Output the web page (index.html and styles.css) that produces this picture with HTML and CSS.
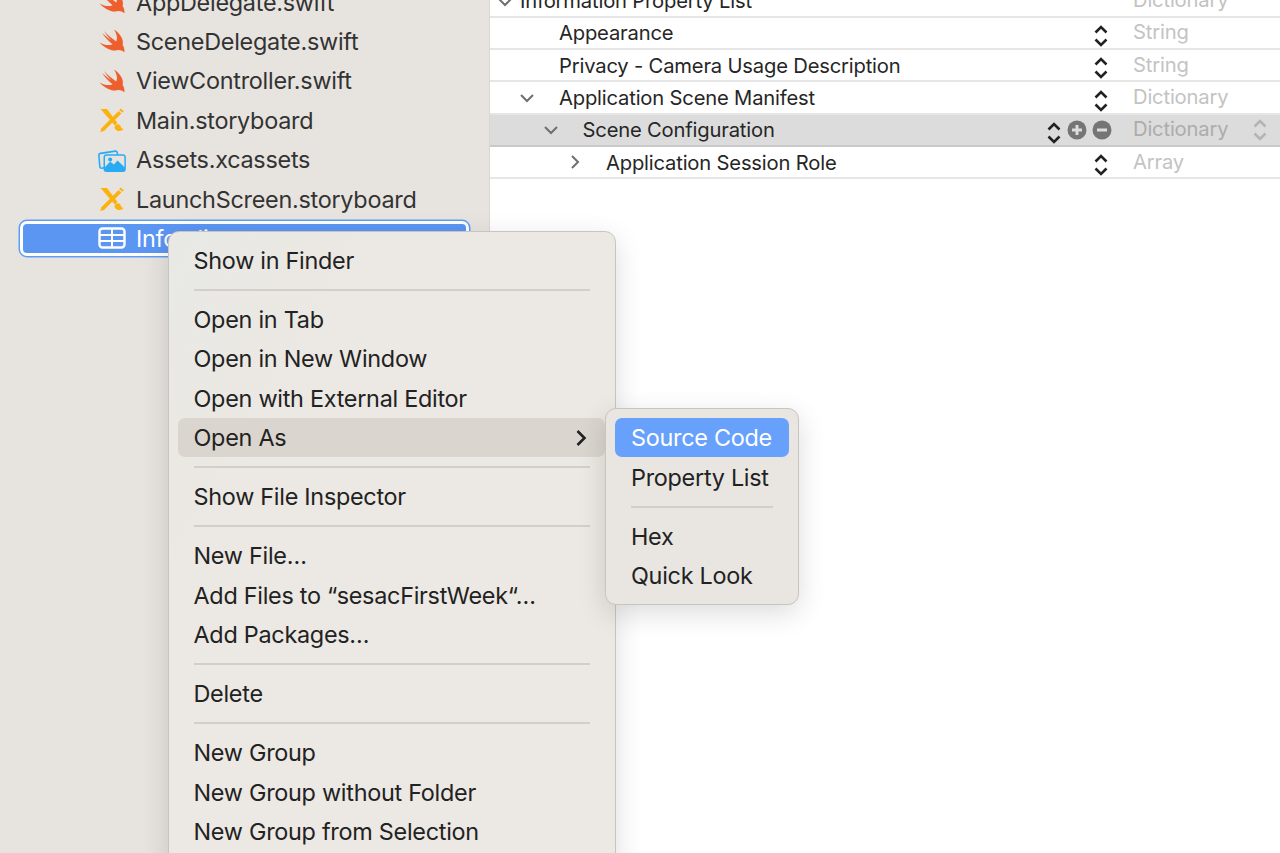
FILE: index.html
```html
<!DOCTYPE html>
<html lang="en">
<head>
<meta charset="utf-8">
<title>Xcode</title>
<link rel="stylesheet" href="styles.css">
</head>
<body>
<svg class="defs" width="0" height="0" aria-hidden="true">
  <defs>
    <symbol id="swift" viewBox="0 0 26 24">
      <path d="M0.5 13.5C5 18 12 23 18 21.2C20.2 20.6 22.5 21 25.5 23.2C25.6 20 24.8 17.6 23.6 16C25.2 10.5 21 4.5 15 0.5C17.5 4.5 19 9 17.2 12.4C13 9.5 8.2 5.4 5 2C7 5.2 10 9 12.2 11.2C9 9 5.6 6.2 3 4C6 8.2 10 12.6 13.6 15.2C10 17 5 16 0.5 13.5Z" fill="#ef5f2e"/>
    </symbol>
    <symbol id="board" viewBox="0 0 26 24">
      <path d="M1.5 1L8 1L18.5 15L15.8 17.5Z" fill="#fbb20f"/>
      <path d="M19.6 3L22.4 5.6L5 23L1.2 24L2.4 20.2Z" fill="#fbb20f"/>
      <path d="M21.6 0.4L24.8 3.2L23.4 4.8L20.2 2Z" fill="#fbb20f"/>
      <path d="M15.4 19.4C16.4 15.4 20.8 15.6 21.8 18.4C22.2 19.8 23 20.6 24.6 20.8C22.8 23.8 17.2 24.2 15.4 19.4Z" fill="#fbb20f"/>
    </symbol>
    <symbol id="assets" viewBox="0 0 30 26">
      <path d="M6.5 21.5L4 21.9C2.8 22 2 21.4 1.8 20.3L0.8 8C0.7 6.8 1.4 6 2.5 5.8L18.5 3.4C19.7 3.3 20.5 4 20.7 5L21 7.5" fill="none" stroke="#29abf4" stroke-width="1.7"/>
      <rect x="6.6" y="7.6" width="22.6" height="17.6" rx="2.4" fill="none" stroke="#29abf4" stroke-width="1.6"/>
      <path d="M7 21L13 14.5L17 18L21 13.5L29 21V23C29 24.2 28 25 27 25H9C7.8 25 7 24.2 7 23Z" fill="#29abf4"/>
      <circle cx="13" cy="12.5" r="2.2" fill="#29abf4"/>
    </symbol>
    <symbol id="updown" viewBox="0 0 16 24">
      <path d="M2.5 8.5L8 3L13.5 8.5M2.5 15.5L8 21L13.5 15.5" fill="none" stroke="currentColor" stroke-width="2.6"/>
    </symbol>
  </defs>
</svg>

<div class="window">
  <aside class="navigator">
    <div class="file-list">
      <div class="file"><svg class="file-icon"><use href="#swift"/></svg><span>AppDelegate.swift</span></div>
      <div class="file"><svg class="file-icon"><use href="#swift"/></svg><span>SceneDelegate.swift</span></div>
      <div class="file"><svg class="file-icon"><use href="#swift"/></svg><span>ViewController.swift</span></div>
      <div class="file"><svg class="file-icon"><use href="#board"/></svg><span>Main.storyboard</span></div>
      <div class="file"><svg class="file-icon"><use href="#assets"/></svg><span>Assets.xcassets</span></div>
      <div class="file"><svg class="file-icon"><use href="#board"/></svg><span>LaunchScreen.storyboard</span></div>
      <div class="file selected">
        <svg class="file-icon" viewBox="0 0 28 22"><rect x="1.5" y="1.5" width="25" height="19" rx="3" fill="none" stroke="#fff" stroke-width="2.4"/><path d="M2 8H26M2 14H26M14 2V20" stroke="#fff" stroke-width="2"/></svg>
        <span>Info.plist</span>
      </div>
    </div>
  </aside>

  <main class="plist">
    <div class="plist-rows">
      <div class="row top">
        <span class="twisty"><svg viewBox="0 0 16 10"><path d="M2 2L8 8L14 2"/></svg></span>
        <span class="key">Information Property List</span>
        <span class="type">Dictionary</span>
      </div>
      <div class="row lvl1">
        <span class="twisty"></span>
        <span class="key">Appearance</span>
        <span class="controls"><svg class="updown"><use href="#updown"/></svg></span>
        <span class="type">String</span>
      </div>
      <div class="row lvl1">
        <span class="twisty"></span>
        <span class="key">Privacy - Camera Usage Description</span>
        <span class="controls"><svg class="updown"><use href="#updown"/></svg></span>
        <span class="type">String</span>
      </div>
      <div class="row lvl1">
        <span class="twisty"><svg viewBox="0 0 16 10"><path d="M2 2L8 8L14 2"/></svg></span>
        <span class="key">Application Scene Manifest</span>
        <span class="controls"><svg class="updown"><use href="#updown"/></svg></span>
        <span class="type">Dictionary</span>
      </div>
      <div class="row lvl2 current">
        <span class="twisty"><svg viewBox="0 0 16 10"><path d="M2 2L8 8L14 2"/></svg></span>
        <span class="key">Scene Configuration</span>
        <span class="controls wide">
          <svg class="updown"><use href="#updown"/></svg>
          <svg class="round" viewBox="0 0 20 20"><circle cx="10" cy="10" r="9.5" fill="#757575"/><path d="M10 5V15M5 10H15" stroke="#dcdcdc" stroke-width="3"/></svg>
          <svg class="round" viewBox="0 0 20 20"><circle cx="10" cy="10" r="9.5" fill="#757575"/><path d="M5 10H15" stroke="#dcdcdc" stroke-width="3"/></svg>
        </span>
        <span class="type">Dictionary<svg class="updown muted"><use href="#updown"/></svg></span>
      </div>
      <div class="row lvl3">
        <span class="twisty"><svg class="closed" viewBox="0 0 10 16"><path d="M2 2L8 8L2 14"/></svg></span>
        <span class="key">Application Session Role</span>
        <span class="controls"><svg class="updown"><use href="#updown"/></svg></span>
        <span class="type">Array</span>
      </div>
    </div>
  </main>

  <nav class="menu context">
    <div class="item">Show in Finder</div>
    <div class="sep"></div>
    <div class="item">Open in Tab</div>
    <div class="item">Open in New Window</div>
    <div class="item">Open with External Editor</div>
    <div class="item open">Open As<svg class="arrow" viewBox="0 0 12 18"><path d="M2.5 2L9.5 9L2.5 16"/></svg></div>
    <div class="sep"></div>
    <div class="item">Show File Inspector</div>
    <div class="sep"></div>
    <div class="item">New File…</div>
    <div class="item">Add Files to “sesacFirstWeek“…</div>
    <div class="item">Add Packages…</div>
    <div class="sep"></div>
    <div class="item">Delete</div>
    <div class="sep"></div>
    <div class="item">New Group</div>
    <div class="item">New Group without Folder</div>
    <div class="item">New Group from Selection</div>
  </nav>

  <nav class="menu submenu">
    <div class="item active">Source Code</div>
    <div class="item">Property List</div>
    <div class="sep"></div>
    <div class="item">Hex</div>
    <div class="item">Quick Look</div>
  </nav>
</div>
</body>
</html>
```
FILE: styles.css
```css
* { box-sizing: border-box; }
html, body { margin: 0; padding: 0; height: 100%; overflow: hidden; background: #fff; }
body { font-family: Inter, "Liberation Sans", sans-serif; }
.defs { position: absolute; }

.window { position: relative; display: flex; width: 1280px; height: 853px; overflow: hidden; }

/* navigator */
.navigator { width: 490px; flex: none; background: #e7e4e0; border-right: 1px solid #dad7d3; }
.file-list { margin-top: -17.6px; display: flex; flex-direction: column; }
.file { display: flex; align-items: center; height: 39.4px; padding-left: 99px; gap: 9px; font-size: 23.4px; letter-spacing: -.26px; color: #333; white-space: nowrap; }
.file-icon { width: 28px; height: 24px; flex: none; margin-left: -1px; margin-right: 1px; }
.file.selected { width: 449px; height: 35px; margin: 2.2px 0 0 19.5px; padding-left: 76.5px; color: #fff; background: #5b96f3; border: 3px solid #fff; border-radius: 7px; box-shadow: 0 0 0 1.5px #5f9df5; }
.file.selected .file-icon { height: 22px; }

/* plist table */
.plist { flex: 1; min-width: 0; }
.plist-rows { margin-top: -14.5px; display: flex; flex-direction: column; }
.row { display: flex; align-items: center; height: 32.3px; border-bottom: 2px solid #e6e6e6; font-size: 20.2px; letter-spacing: -.18px; color: #262626; white-space: nowrap; }
.twisty { width: 64px; flex: none; display: flex; justify-content: center; align-items: center; }
.twisty svg { width: 16px; height: 10px; fill: none; stroke: #6f6f6f; stroke-width: 2; }
.twisty svg.closed { width: 10px; height: 16px; margin-left: 2px; }
.top .twisty { width: 30px; }
.top .twisty svg { margin-top: 3px; }
.lvl1 { padding-left: 5px; }
.lvl2 { padding-left: 28.5px; }
.lvl3 { padding-left: 52px; }
.key { flex: 1; min-width: 0; }
.controls { display: flex; align-items: center; color: #222; margin-right: 24px; gap: 5px; }
.controls.wide { margin-right: 21px; }
.controls .updown { margin-top: 6px; }
.updown { width: 16px; height: 24px; flex: none; }
.round { width: 20px; height: 20px; flex: none; }
.type { width: 147px; flex: none; display: flex; align-items: center; justify-content: space-between; padding-right: 12px; margin-bottom: 2px; color: #c3c3c3; }
.current { background: #dcdcdc; border-bottom-color: #c9c9c9; }
.current .type { color: #acacac; }
.updown.muted { color: #b4b4b4; margin-top: 2px; }

/* menus */
.menu { position: absolute; background: #ece8e3; border: 1px solid #c8c4bf; border-radius: 11px; padding: 9px; font-size: 23.4px; letter-spacing: -.27px; color: #222; white-space: nowrap; box-shadow: 0 8px 28px rgba(0, 0, 0, .14); }
.context { left: 167.5px; top: 230.8px; width: 448.5px; height: 700px; background: linear-gradient(120deg, #e8e9e5 0, #ece8e3 180px); }
.submenu { left: 605px; top: 408px; width: 194px; height: 197px; background: #e9e6e2; }
.item { display: flex; align-items: center; justify-content: space-between; height: 39.4px; padding: 0 16px; border-radius: 7px; }
.sep { height: 19.7px; display: flex; align-items: center; margin: 0 16px; }
.sep::before { content: ""; flex: 1; height: 2px; background: #d3cec8; }
.item.open { background: #dbd5cf; margin-right: 1px; }
.arrow { width: 12px; height: 18px; margin-right: 2px; fill: none; stroke: #222; stroke-width: 2.6; }
.item.active { background: #67a1fb; color: #fff; }
```
